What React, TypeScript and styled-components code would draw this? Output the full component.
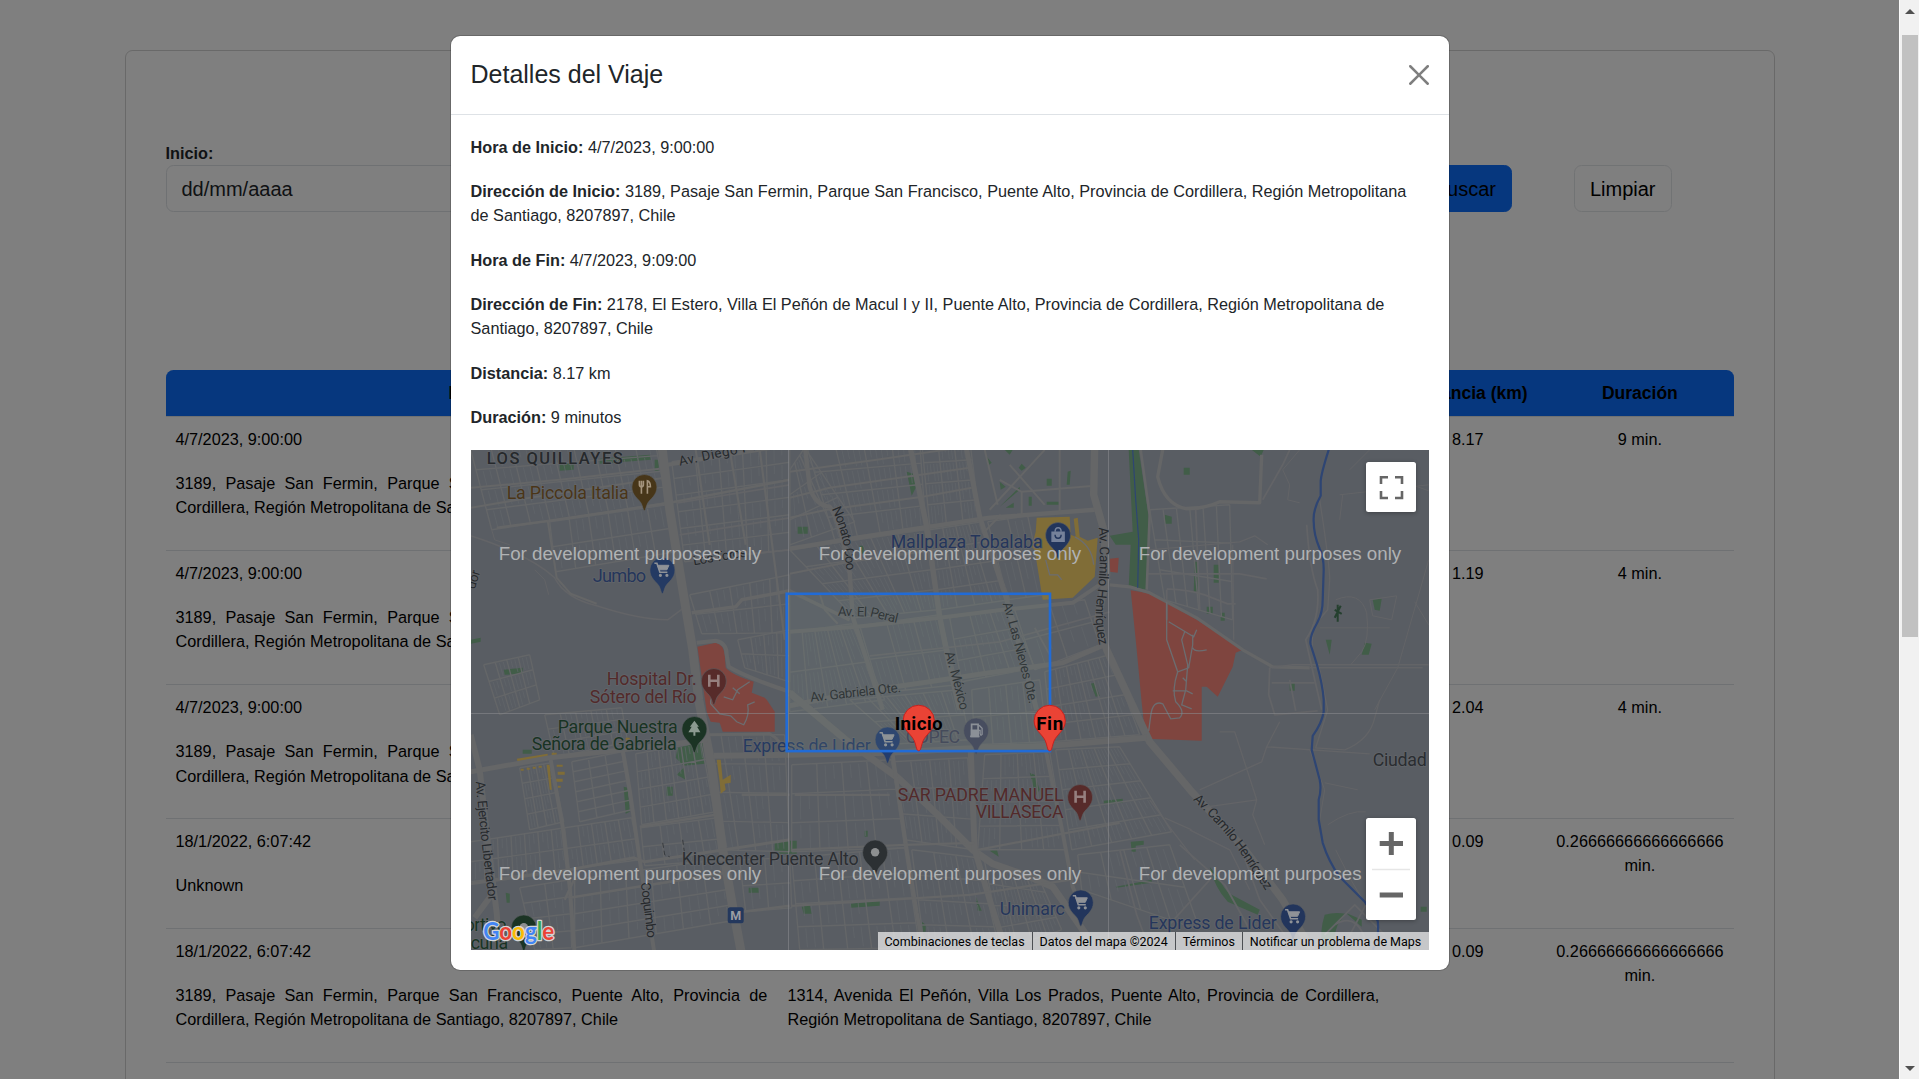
import React from "react";
import styled, { createGlobalStyle } from "styled-components";

const sans = `"Liberation Sans", Arial, sans-serif`;
const mapFont = `Roboto, "Liberation Sans", sans-serif`;

const GlobalStyle = createGlobalStyle`
  *, *::before, *::after { box-sizing: border-box; }
  html { font-size: 20px; }
  body { margin: 0; font-family: ${sans}; color: #212529; background: #fff; overflow: hidden; }
  p { margin: 0 0 1rem; }
`;

/* ---------- page frame ---------- */

const Frame = styled.div`
  display: flex;
  width: 1919px;
  height: 1079px;
  overflow: hidden;
`;

const Viewport = styled.div`
  position: relative;
  flex: 1;
  overflow: hidden;
`;

const ScrollBar = styled.div`
  display: flex;
  flex-direction: column;
  align-items: center;
  width: 20px;
  padding: 9px 1px 8px 2px;
  background: #f1f1f1;
  border-left: 1px solid #fafafa;
`;

const ScrollArrow = styled.div<{ $down?: boolean }>`
  width: 0;
  height: 0;
  border: 5px solid transparent;
  border-top: ${(p) => (p.$down ? "5px solid #505050" : "0")};
  border-bottom: ${(p) => (p.$down ? "0" : "5px solid #505050")};
`;

const ScrollThumb = styled.div`
  width: 100%;
  height: 602px;
  margin-top: 21px;
  margin-bottom: auto;
  background: #c1c1c1;
`;

/* ---------- trips page ---------- */

const Card = styled.main`
  width: 1650px;
  height: 1300px;
  margin: 50px auto 0;
  padding: 90px 40px 40px;
  border: 1px solid rgba(0, 0, 0, 0.175);
  border-radius: 7.5px;
`;

const Filters = styled.form`
  display: flex;
  align-items: flex-end;
  gap: 62px;
  padding-right: 62px;
  margin-bottom: 158px;
`;

const Field = styled.label`
  flex: 1;
  font-size: 16.25px;
  line-height: 24.375px;
  font-weight: 700;
`;

const DateBox = styled.div`
  height: 47px;
  padding: 7.5px 15px;
  border: 1px solid #dee2e6;
  border-radius: 7.5px;
  font-size: 20px;
  line-height: 30px;
  font-weight: 400;
`;

const Button = styled.button<{ $primary?: boolean }>`
  height: 47px;
  padding: 1px 15px 0;
  border: 1px solid ${(p) => (p.$primary ? "#0d6efd" : "#e3e6e9")};
  border-radius: 7.5px;
  background: ${(p) => (p.$primary ? "#0d6efd" : "transparent")};
  font: 20px ${sans};
  color: #000;
`;

const Row = styled.div`
  display: grid;
  grid-template-columns: 1fr 1fr 157px 187.2px;
  border-bottom: 1px solid #dee2e6;
  color: #000;
  font-size: 16.25px;
  line-height: 24.375px;
`;

const HeadRow = styled(Row)`
  height: 46.2px;
  background: #0d6efd;
  background-clip: padding-box;
  border-radius: 7.5px 7.5px 0 0;
  font-size: 17.5px;
  line-height: 26.25px;
  font-weight: 700;
`;

const Cell = styled.div<{ $center?: boolean }>`
  padding: 10px;
  text-align: ${(p) => (p.$center ? "center" : "justify")};
`;

/* ---------- modal ---------- */

const Backdrop = styled.div`
  position: absolute;
  inset: 0;
  display: flex;
  justify-content: center;
  align-items: flex-start;
  padding-top: 35px;
  background: rgba(0, 0, 0, 0.5);
`;

const Dialog = styled.section`
  width: 1000px;
  background: #fff;
  background-clip: padding-box;
  border: 1px solid rgba(0, 0, 0, 0.175);
  border-radius: 10px;
`;

const DialogHeader = styled.header`
  display: flex;
  align-items: center;
  justify-content: space-between;
  padding: 20px;
  border-bottom: 1px solid #dee2e6;
`;

const Title = styled.h5`
  margin: 0;
  font-size: 25px;
  line-height: 37.5px;
  font-weight: 400;
`;

const CloseIcon = styled.svg`
  width: 20px;
  height: 20px;
  opacity: 0.5;
`;

const DialogBody = styled.div`
  padding: 20px;
  font-size: 16.25px;
  line-height: 24.375px;
`;

const MapBox = styled.div`
  position: relative;
  height: 500px;
  overflow: hidden;
  background: #595d63;
  font-family: ${mapFont};
`;

const MapDrawing = styled.svg`
  display: block;
  width: 958px;
  height: 500px;
`;

const MapControl = styled.div<{ $tall?: boolean }>`
  position: absolute;
  right: 12.5px;
  ${(p) => (p.$tall ? "bottom: 30px; height: 102px;" : "top: 12.5px; height: 50px;")}
  width: 50px;
  background: #fff;
  border-radius: 2.5px;
  box-shadow: 0 1px 4px rgba(0, 0, 0, 0.3);
`;

const Attribution = styled.footer`
  position: absolute;
  right: 0;
  bottom: 0;
  display: flex;
  height: 17.5px;
  background: rgba(245, 245, 245, 0.7);
  color: #000;
  font-size: 12.5px;
  line-height: 19.5px;
  white-space: nowrap;
`;

const Credit = styled.span`
  padding: 0 7.2px 0 6.8px;
  & + & { border-left: 1px solid #4c4f53; }
`;

/* ---------- map data (x, y in map units) ---------- */

type Pt = [number, number];

const lerp = (a: Pt, b: Pt, t: number): Pt => [a[0] + (b[0] - a[0]) * t, a[1] + (b[1] - a[1]) * t];
const seg = (a: Pt, b: Pt) => `M${a[0].toFixed(1)} ${a[1].toFixed(1)}L${b[0].toFixed(1)} ${b[1].toFixed(1)}`;

/** Street blocks filling a quadrilateral, corners clockwise from top left. */
function Blocks({ q, c, r, sub = 3 }: { q: [Pt, Pt, Pt, Pt]; c: number; r: number; sub?: number }) {
  const [tl, tr, br, bl] = q;
  let main = "";
  let faint = "";
  for (let i = 0; i <= c; i++) main += seg(lerp(tl, tr, i / c), lerp(bl, br, i / c));
  for (let j = 0; j <= r; j++) main += seg(lerp(tl, bl, j / r), lerp(tr, br, j / r));
  for (let j = 0; j < r; j++) {
    for (let i = 0; i < c; i++) {
      if ((i * 5 + j * 3) % 7 === 0) continue;
      for (let k = 1; k < sub; k++) {
        const t = (i + k / sub) / c;
        const top = lerp(tl, tr, t);
        const bot = lerp(bl, br, t);
        faint += seg(lerp(top, bot, (j + 0.08) / r), lerp(top, bot, (j + ((i + k + j) % 3 ? 0.9 : 0.55)) / r));
      }
    }
  }
  return (
    <g fill="none">
      <path d={faint} stroke="#62656a" strokeWidth="0.7" />
      <path d={main} stroke="#646668" strokeWidth="1.4" />
    </g>
  );
}

const blocks: { q: [Pt, Pt, Pt, Pt]; c: number; r: number; sub?: number }[] = [
  { q: [[471, 450], [655, 440], [667, 503], [492, 530]], c: 9, r: 4 },
  { q: [[550, 522], [667, 505], [676, 552], [556, 572]], c: 6, r: 2 },
  { q: [[672, 462], [790, 445], [790, 550], [685, 562]], c: 5, r: 6 },
  { q: [[690, 595], [790, 575], [790, 633], [702, 634]], c: 5, r: 2 },
  { q: [[738, 640], [790, 630], [790, 682], [745, 668]], c: 4, r: 2 },
  { q: [[790, 470], [805, 448], [855, 522], [790, 545]], c: 3, r: 3 },
  { q: [[808, 450], [920, 442], [926, 527], [835, 540]], c: 4, r: 4, sub: 5 },
  { q: [[922, 442], [970, 440], [980, 520], [930, 526]], c: 3, r: 4, sub: 5 },
  { q: [[790, 550], [925, 530], [938, 610], [855, 618]], c: 5, r: 4, sub: 5 },
  { q: [[930, 530], [982, 522], [1010, 600], [940, 610]], c: 4, r: 4, sub: 4 },
  { q: [[988, 522], [1028, 516], [1045, 595], [1008, 600]], c: 2, r: 2 },
  { q: [[700, 735], [785, 735], [790, 852], [722, 850]], c: 4, r: 4 },
  { q: [[790, 633], [852, 624], [885, 700], [790, 712]], c: 5, r: 2, sub: 4 },
  { q: [[860, 626], [940, 615], [958, 685], [880, 693]], c: 3, r: 2, sub: 5 },
  { q: [[950, 618], [1010, 608], [1035, 668], [962, 682]], c: 3, r: 3, sub: 4 },
  { q: [[1015, 610], [1085, 600], [1100, 645], [1035, 670]], c: 2, r: 2 },
  { q: [[850, 700], [960, 690], [970, 740], [900, 744]], c: 6, r: 2, sub: 4 },
  { q: [[972, 690], [1040, 680], [1048, 742], [975, 745]], c: 4, r: 2 },
  { q: [[1045, 672], [1110, 655], [1140, 735], [1052, 742]], c: 6, r: 4 },
  { q: [[985, 755], [1050, 752], [1066, 850], [978, 850]], c: 4, r: 4, sub: 4 },
  { q: [[1056, 750], [1120, 747], [1172, 832], [1072, 850]], c: 5, r: 5, sub: 4 },
  { q: [[892, 762], [968, 758], [974, 850], [905, 840]], c: 4, r: 3, sub: 4 },
  { q: [[792, 765], [892, 760], [905, 848], [792, 852]], c: 4, r: 3 },
  { q: [[792, 858], [905, 848], [920, 948], [800, 950]], c: 5, r: 4 },
  { q: [[912, 850], [978, 858], [1000, 950], [925, 950]], c: 3, r: 4, sub: 4 },
  { q: [[985, 862], [1040, 880], [1062, 930], [1002, 950]], c: 4, r: 4, sub: 4 },
  { q: [[1078, 855], [1170, 845], [1200, 930], [1082, 890]], c: 4, r: 2 },
  { q: [[545, 715], [622, 708], [628, 742], [555, 758]], c: 5, r: 3 },
  { q: [[520, 768], [552, 763], [564, 822], [530, 830]], c: 4, r: 4 },
  { q: [[572, 762], [622, 752], [632, 810], [580, 822]], c: 3, r: 6, sub: 1 },
  { q: [[636, 754], [704, 742], [716, 812], [642, 825]], c: 6, r: 4 },
  { q: [[471, 842], [632, 818], [640, 860], [471, 882]], c: 12, r: 2 },
  { q: [[641, 828], [718, 818], [726, 860], [645, 866]], c: 4, r: 2 },
  { q: [[520, 888], [570, 880], [572, 948], [535, 950]], c: 2, r: 4 },
  { q: [[575, 880], [728, 858], [738, 920], [575, 948]], c: 6, r: 4 },
  { q: [[740, 860], [790, 858], [792, 908], [746, 912]], c: 2, r: 2 },
  { q: [[484, 665], [530, 655], [540, 700], [500, 715]], c: 4, r: 3 },
  { q: [[1150, 510], [1230, 505], [1233, 620], [1165, 600]], c: 6, r: 3, sub: 1 },
];

const roads: { d: string; w: number; c?: string }[] = [
  { d: "M471 536Q530 555 555 578Q565 598 597 606Q640 620 668 620L684 608", w: 1.5 },
  { d: "M535 570L545 580L549 595M492 530L495 540L510 545", w: 1 },
  { d: "M471 508L530 498L665 478", w: 2 },
  { d: "M471 488L560 480L660 469", w: 2 },
  { d: "M497 528L550 521L670 503L790 480", w: 2.4 },
  { d: "M548 521L557 578L571 594L597 604", w: 2 },
  { d: "M668 465L790 445", w: 4 },
  { d: "M678 503L790 485M680 535L790 518M688 560L790 550", w: 1.8 },
  { d: "M696 450L710 545M730 450L746 545M760 450L785 640", w: 2.2 },
  { d: "M692 613L736 607L742 600L790 591L850 620", w: 3.5 },
  { d: "M697 643L716 641Q727 643 727 655L729 667Q745 677 790 692L825 720", w: 4 },
  { d: "M805 445L810 487Q815 505 830 507Q840 520 850 573L853 617L883 710", w: 4.5 },
  { d: "M790 472L877 460L1000 442M790 498L830 488L970 468", w: 2 },
  { d: "M790 518L827 510L923 497L972 488", w: 2 },
  { d: "M790 549L857 538L923 528L990 518L1095 510", w: 4.5 },
  { d: "M911 450L927 527L940 617L950 667L960 710", w: 5.5 },
  { d: "M967 450L980 517L1007 600L1037 710", w: 5 },
  { d: "M985 450L998 505M1001 515L983 534M990 510L1045 450M1010 465L1045 505M1060 450L1060 512M1000 480L1022 492L1095 486M1022 492V515", w: 2 },
  { d: "M790 574L850 562L938 550M820 594L825 610L838 624", w: 2 },
  { d: "M790 632L857 627L940 618L1003 610L1073 603L1110 578", w: 4 },
  { d: "M790 706L860 692L923 683L990 673L1063 663L1105 645", w: 5 },
  { d: "M870 656L1000 642L1110 612M1035 628L1050 655", w: 1.8 },
  { d: "M1095 445L1094 495L1104 530L1107 575L1098 620L1107 650L1135 710L1150 742L1193 793L1243 847L1283 900L1312 950", w: 7.5 },
  { d: "M662 445L670 510L683 590L693 650L699 700L712 767L723 850L733 907L742 955", w: 9 },
  { d: "M710 735L770 734Q782 740 785 755", w: 3 },
  { d: "M714 756L790 755L890 753L960 749L1050 746L1147 738", w: 6 },
  { d: "M790 693L846 740L897 777L937 814L973 850L993 864L1030 877L1053 887L1067 907L1090 940", w: 7 },
  { d: "M971 750L975 850L990 900L1006 950", w: 6 },
  { d: "M893 755L907 850L917 913L925 955", w: 4 },
  { d: "M1045 745L1063 833L1073 887L1078 900", w: 4 },
  { d: "M471 772L550 758L623 750L708 740", w: 5 },
  { d: "M623 750L630 790L640 860L655 955", w: 4 },
  { d: "M551 760L563 827L570 887L575 955", w: 4 },
  { d: "M471 884L570 870L634 858L645 862L790 840", w: 3 },
  { d: "M471 735L480 770L487 833L497 913L500 955M475 918L492 895", w: 6 },
  { d: "M565 900L578 872M570 898L725 873M640 827L716 815M743 912L790 906M742 795H790", w: 2.5 },
  { d: "M795 795H890M792 850L905 845L975 843M792 906L970 895L1070 880M978 850L1120 823", w: 2.2 },
  { d: "M1163 450L1158 477Q1165 505 1187 509Q1205 509 1220 502L1260 503L1262 455", w: 3.4 },
  { d: "M1263 500L1283 465L1290 450M1196 510L1200 610M1167 590V620M1147 574H1240L1267 579M1167 589Q1190 590 1205 595L1228 604H1236", w: 1.8 },
  { d: "M1233 545L1234 640M1150 550L1240 542L1255 536L1268 545", w: 1.3 },
  { d: "M1110 585L1130 587L1150 593L1197 618L1243 650L1273 667L1310 668", w: 3.2 },
  { d: "M1270 668L1293 665H1429M1310 668H1423", w: 1.4 },
  { d: "M1141 450L1150 515L1147 590", w: 2.6 },
  { d: "M1307 525Q1310 570 1318 590Q1320 620 1306 640L1315 680L1322 710", w: 1.8 },
  { d: "M1320 500Q1330 565 1330 580L1328 610L1315 625Q1308 650 1320 670L1328 710L1316 748L1345 750Q1370 740 1375 718L1380 700", w: 1.3 },
  { d: "M1336 600Q1360 590 1367 613Q1370 640 1362 652L1351 665M1320 628H1390M1370 600L1397 596L1392 620L1373 616Z", w: 1 },
  { d: "M1429 560L1398 668L1375 710M1415 602L1429 625", w: 1 },
  { d: "M1300 450L1283 470L1290 485L1288 500L1300 503M1343 495L1340 520M1340 495L1429 485M1370 450L1350 470M1370 470L1429 491", w: 1 },
  { d: "M1270 668L1269 695L1275 715L1318 711M1272 683H1315M1290 680L1296 711", w: 1.8 },
  { d: "M1200 790L1262 762L1267 747L1280 722M1220 732L1235 732L1257 800L1253 815L1265 845M1267 747L1370 754M1200 808L1257 800M1165 818L1192 830", w: 1.3 },
  { d: "M1310 750L1325 790L1320 820M1325 783L1358 790M1328 825Q1350 810 1366 812M1336 850Q1350 880 1366 905", w: 1 },
  { d: "M1120 850L1137 915L1150 950M1165 930L1210 880M1180 845L1225 885L1250 930M1240 845L1260 900L1285 935", w: 1.8 },
  { d: "M1325 935L1355 905L1385 935M1335 925Q1360 910 1368 950M1345 945L1366 905", w: 1.8 },
  { d: "M1190 830L1230 850L1250 890M1150 800L1172 830L1195 860", w: 1.3 },
];

const greens = [
  "M1129 450L1139 450L1149 517L1147 590L1129 587L1131 545L1116 545L1110 536L1133 532Z",
  "M560 464L574 462V470L560 471ZM600 464V459L650 455L651 460ZM655 460H659V471H655Z",
  "M471 640L481 638V642L471 644ZM504 670L523 668V674L505 675Z",
  "M678 748L703 742L705 764L684 766L676 758ZM677 775L684 768L686 780Z",
  "M523 750H532V754H523ZM624 787L628 788L630 812L626 814ZM667 787H673V796H667ZM506 893L510 894V903H507Z",
  "M775 841H797V854H775ZM749 888H759V893H749Z",
  "M907 472L914 474L916 488L912 496ZM798 527H808V534H798ZM860 546H864V554H860Z",
  "M987 457L992 463L988 466ZM1005 450L1010 455L1013 450ZM1019 468L1022 464L1026 468L1022 471ZM1000 482L1006 487L1001 490ZM1000 507L1020 487V490ZM1047 479H1052V486H1047ZM1068 472L1071 471L1070 485H1067ZM1006 508L1014 503V508ZM1029 497H1032V506H1029ZM1047 502H1059V505H1047Z",
  "M1091 684L1095 683L1100 696L1096 697ZM1030 773L1035 775L1040 790L1036 796ZM1104 801L1123 799V803L1104 804ZM1131 842L1144 841V845L1136 846V852H1132Z",
  "M990 851L997 849L999 857ZM865 831H868V837H865ZM802 907L810 905L812 914H804ZM851 904L880 901V906L851 908ZM976 897L982 911H978ZM922 922L926 925V932H923ZM1116 887L1152 880V883L1117 888Z",
  "M1184 468H1190V475H1184ZM1165 515L1172 517V524H1165ZM1195 562H1198V592H1194ZM1214 565H1219V583H1214ZM1207 607H1213V614H1207ZM1221 613H1225V621H1221ZM1252 450L1264 450L1261 457Z",
  "M1373 600L1382 599L1380 611L1375 610ZM1326 640L1332 640L1330 655ZM1365 643L1372 644L1369 655H1362ZM1290 683H1295V691H1290Z",
  "M1210 867L1218 877Q1225 890 1230 894L1260 910L1258 915L1228 902Q1215 888 1210 867Z",
  "M1325 915Q1335 912 1346 914L1338 925Q1334 935 1334 950L1322 950Q1320 930 1325 915ZM1346 913L1362 920V927ZM1421 907H1427V912H1421Z",
];

const yellows = [
  "M1037 518L1070 517L1071 535L1076 537L1074 519L1078 518L1080 537L1088 541L1098 538L1095 577L1073 598L1043 600L1035 550L1032 547L1036 532Z",
  "M517 759L548 754V757L518 762ZM547 765L550 765L552 790H550ZM552 753H557V756H552ZM521 769H524V771H521ZM527 768H530V770H527ZM533 767H536V769H533ZM539 766H542V768H539Z",
  "M717 760H721L723 780L731 775V783L725 784L726 790L721 794L720 782Z",
  "M557 765H563V767H557ZM558 772H565V775H558ZM556 779H563V782H556ZM558 786H561V788H558ZM626 738H630V741H626Z",
];

const labels: { t: string; x: number; y: number; w: number; s: number; c: string; b?: number }[] = [
  { t: "LOS QUILLAYES", x: 487, y: 464.5, w: 136, s: 16.5, c: "#26292c", b: 500 },
  { t: "La Piccola Italia", x: 507, y: 499.5, w: 122, s: 17.8, c: "#4a3518" },
  { t: "Jumbo", x: 593, y: 582.5, w: 53.5, s: 18.2, c: "#25365b" },
  { t: "Hospital Dr.", x: 607, y: 685.5, w: 90, s: 17.8, c: "#522a2a" },
  { t: "Sótero del Río", x: 590, y: 702.8, w: 107, s: 17.8, c: "#522a2a" },
  { t: "Parque Nuestra", x: 558, y: 733.2, w: 120, s: 17.8, c: "#183323" },
  { t: "Señora de Gabriela", x: 532, y: 750.7, w: 145, s: 17.8, c: "#183323" },
  { t: "Express de Lider", x: 743, y: 752.3, w: 128, s: 17.8, c: "#263a60" },
  { t: "Mallplaza Tobalaba", x: 891, y: 548, w: 152, s: 17.8, c: "#25365b" },
  { t: "COPEC", x: 906, y: 743, w: 54.5, s: 17.8, c: "#3d4054" },
  { t: "SAR PADRE MANUEL", x: 898, y: 800.8, w: 166, s: 17.8, c: "#522a2a" },
  { t: "VILLASECA", x: 976, y: 818.2, w: 88, s: 17.8, c: "#522a2a" },
  { t: "Kinecenter Puente Alto", x: 682, y: 865.2, w: 177, s: 17.8, c: "#2a2d31" },
  { t: "Unimarc", x: 1000, y: 915.2, w: 65, s: 17.8, c: "#25365b" },
  { t: "Express de Lider", x: 1149, y: 928.8, w: 128, s: 17.8, c: "#25365b" },
  { t: "Ciudad", x: 1373, y: 766.3, w: 54, s: 17.8, c: "#2a2d31" },
  { t: "ortivo", x: 465, y: 931, w: 42, s: 17.8, c: "#183323" },
  { t: "cuña", x: 471, y: 949.3, w: 37.5, s: 17.8, c: "#183323" },
];

const streetNames: { t: string; d: string; w: number }[] = [
  { t: "Av. Diego Portales", d: "M680 466L800 441", w: 118 },
  { t: "Los Toros", d: "M694 565.5L752 556", w: 54 },
  { t: "Nonato Coo", d: "M832 509Q842 530 845 552L847 575", w: 64 },
  { t: "Av. El Peral", d: "M838 616L872 617L900 624", w: 60 },
  { t: "Av. Gabriela Ote.", d: "M811 702L902 692", w: 91 },
  { t: "Av. México", d: "M945 653Q953 680 961 712", w: 60 },
  { t: "Av. Las Nieves Ote.", d: "M1003 604Q1014 640 1030 706", w: 104 },
  { t: "Av. Camilo Henríquez", d: "M1099 528Q1102 560 1097 600Q1094 620 1100 647", w: 118 },
  { t: "Av. Camilo Henríquez", d: "M1193 800Q1220 825 1240 852L1266 891", w: 117 },
  { t: "Av. Ejercito Libertador", d: "M476 782Q480 830 489 902", w: 120 },
  { t: "Coquimbo", d: "M641 883L648 940", w: 56 },
  { t: "dor", d: "M475 590L481 571", w: 19 },
];

type Glyph = "food" | "cart" | "H" | "tree" | "bag" | "fuel" | "dot";

function PinGlyph({ g }: { g: Glyph }) {
  const ink = "#8f9297";
  switch (g) {
    case "H":
      return <path d="M-4.5 -6V6M4.5 -6V6M-4.5 0H4.5" stroke="#96807f" strokeWidth="2.6" fill="none" />;
    case "food":
      return (
        <path d="M-5 -6V-2Q-5 0 -3 0T-1 -2V-6M-3 -6V7M3 7V-6Q6 -5 6 0H3" stroke="#a3937c" strokeWidth="1.6" fill="none" />
      );
    case "cart":
      return (
        <g fill="none" stroke={ink} strokeWidth="1.6">
          <path d="M-8 -6.5H-5.5L-2.5 2.5H5" />
          <path d="M-5 -4.5H6.5L4.5 0H-3Z" fill={ink} strokeWidth="1" />
          <circle cx="-2" cy="5.5" r="0.8" />
          <circle cx="4.5" cy="5.5" r="0.8" />
        </g>
      );
    case "tree":
      return <path d="M0 -8L4.5 -2H2.7L6 3.5H1V7H-1V3.5H-6L-2.7 -2H-4.5Z" fill="#8b9a90" />;
    case "bag":
      return (
        <g fill="none" stroke="#75819a" strokeWidth="1.5">
          <path d="M-6 -2.5H6V6.5H-6Z" fill="#75819a" />
          <path d="M-3 -3Q-3 -7 0 -7T3 -3" />
          <path d="M-3 0Q-3 3.5 0 3.5T3 0" stroke="#22355c" />
        </g>
      );
    case "fuel":
      return (
        <g fill="none" stroke="#8d8f98" strokeWidth="1.7">
          <path d="M-4.5 6V-6H2V6M-6 6H3.5" />
          <path d="M-4.5 0H2V6H-4.5Z" fill="#8d8f98" />
          <path d="M3 -5L6 -2V4Q4.5 6 4 3V0H2" strokeWidth="1.3" />
        </g>
      );
    default:
      return <circle r="4.2" fill="#8d8f90" />;
  }
}

const pins: { x: number; y: number; c: string; g: Glyph }[] = [
  { x: 644.3, y: 510.5, c: "#473619", g: "food" },
  { x: 662.3, y: 593.5, c: "#243a63", g: "cart" },
  { x: 713.7, y: 704.5, c: "#572b2a", g: "H" },
  { x: 694.3, y: 752.5, c: "#1b3424", g: "tree" },
  { x: 1058, y: 558.5, c: "#22355c", g: "bag" },
  { x: 887.5, y: 763, c: "#233c6c", g: "cart" },
  { x: 976, y: 754, c: "#3f4258", g: "fuel" },
  { x: 1080, y: 820.5, c: "#572b2a", g: "H" },
  { x: 875, y: 876, c: "#2c3033", g: "dot" },
  { x: 1080.7, y: 926, c: "#22355c", g: "cart" },
  { x: 1293, y: 940, c: "#22355c", g: "cart" },
  { x: 523.7, y: 951, c: "#1b3424", g: "dot" },
];

const markers = [
  { x: 919, label: "Inicio", w: 48 },
  { x: 1050, label: "Fin", w: 27 },
];

const logo: [string, string][] = [
  ["G", "#4285f4"],
  ["o", "#ea4335"],
  ["o", "#fbbc04"],
  ["g", "#4285f4"],
  ["l", "#34a853"],
  ["e", "#ea4335"],
];

function CityMap() {
  return (
    <MapDrawing viewBox="471.3 450.2 958 500" fontFamily={mapFont}>
      <rect x="470" y="449" width="962" height="504" fill="#595d63" />
      {greens.map((d) => (
        <path key={d} d={d} fill="#415d48" />
      ))}
      {blocks.map((b, i) => (
        <Blocks key={i} {...b} />
      ))}
      {yellows.map((d) => (
        <path key={d} d={d} fill="#806d37" />
      ))}
      <path
        d="M697.7 647L716 643Q724 645 725 655L726 668Q732 675 754 682L752 693L765 698L767 700L775 712V732H723L720 723L711 722L707 712Z"
        fill="#7f453f"
      />
      <path d="M1110 559L1119 558L1118 573L1110 572Z" fill="#7f453f" />
      <path
        d="M1131 590.5L1152 594L1197 620L1243 650L1236 653L1233 667L1218 697L1207 687H1202V741L1146 739L1142 703L1137 650Z"
        fill="#7f453f"
      />
      <g fill="none" strokeLinejoin="round">
        {roads.map((r) => (
          <path key={r.d} d={r.d} strokeWidth={r.w} stroke={r.w < 2 ? "#636467" : "#656667"} />
        ))}
      </g>
      <g fill="none" stroke="#6c6d70" strokeWidth="1.3">
        <path d="M1167 602V640L1178 672L1189 668L1193 645V635M1169 622L1194 637L1197 630M1185 632L1182 640L1188 665L1186 690L1182 705L1192 709M1178 672Q1172 690 1176 702Q1186 712 1180 718L1171 719L1163 704Q1153 700 1151 716L1149 731M1193 648Q1195 653 1207 650M1173 691H1187L1193 694M1183 678L1187 682" />
        <path d="M718 695Q710 697 711 704L720 714L731 716L737 722L744 725Q750 715 748 705L755 702M724 697L733 700L738 690L750 682M733 688L740 694" />
        <path d="M1046 560L1050 575H1058L1062 580M1075 537Q1092 545 1094 565" />
      </g>
      <g fill="none" stroke="#2e4573">
        <path
          strokeWidth="2.2"
          d="M1329 450Q1321 475 1321 482V496Q1313 510 1314 522Q1314 535 1320 549Q1324 557 1324 570L1323 600Q1323 613 1318 622Q1309 638 1311 645L1317 664Q1323 685 1324 700V712Q1322 724 1313 736L1312 750L1320 780Q1322 790 1319 800V820L1323 843Q1329 862 1340 877L1365 902L1378 921Q1380 938 1373 950"
        />
        <path strokeWidth="1.2" d="M1133 450L1136 500L1139 540L1138 588" />
      </g>
      <path d="M1338 605V622M1335 610L1342 614M1335 618L1341 606" stroke="#25402f" strokeWidth="2" />
      <path d="M663 843L665 855L670 857M683 840L685 855" stroke="#36393d" strokeWidth="1" strokeDasharray="5 3" fill="none" />

      {/* tile seams */}
      <path d="M471 713.7H1432M788.8 450V952M1108.8 450V952" stroke="#8b8d90" strokeWidth="0.8" opacity="0.7" />

      <g fill="#26292c" fontSize="13.4" stroke="#62656a" strokeWidth="1.2" paintOrder="stroke">
        {streetNames.map((s, i) => (
          <React.Fragment key={i}>
            <path id={`street-${i}`} d={s.d} fill="none" stroke="none" />
            <text>
              <textPath href={`#street-${i}`} textLength={s.w}>
                {s.t}
              </textPath>
            </text>
          </React.Fragment>
        ))}
      </g>
      <g stroke="#62656a" strokeWidth="1.6" paintOrder="stroke" strokeLinejoin="round">
        {labels.map((l) => (
          <text key={l.t + l.y} x={l.x} y={l.y} textLength={l.w} fontSize={l.s} fontWeight={l.b ?? 400} fill={l.c}>
            {l.t}
          </text>
        ))}
      </g>
      {pins.map((p) => (
        <g key={`${p.x}`} transform={`translate(${p.x + 0.4} ${p.y + 0.5})`}>
          <path
            d="M0 0C-1.5 -1 -1.5 -4.5 -3.5 -8C-6 -12 -12.5 -15.5 -12.5 -23.8A12.5 12.5 0 0 1 12.5 -23.8C12.5 -15.5 6 -12 3.5 -8C1.5 -4.5 1.5 -1 0 0Z"
            fill={p.c}
            stroke="#5d5f63"
            strokeWidth="0.6"
          />
          <g transform="translate(0 -24)">
            <PinGlyph g={p.g} />
          </g>
        </g>
      ))}
      <rect x="728" y="907.5" width="16" height="16" rx="2.5" fill="#24385d" />
      <text x="736" y="920" textAnchor="middle" fontSize="12.5" fontWeight="700" fill="#9a9da3">
        M
      </text>

      {/* trip bounds */}
      <rect x="787" y="594" width="263.3" height="157.3" fill="rgba(130,155,150,0.12)" stroke="#216bd6" strokeWidth="2.6" />

      <g fill="#b0b2b4" fontFamily={sans} fontSize="18.75">
        {[499, 819, 1139].map((x) =>
          [560.7, 880.7].map((y) => (
            <text key={`${x}-${y}`} x={x} y={y} textLength="262.5">
              For development purposes only
            </text>
          ))
        )}
      </g>

      {markers.map((m) => (
        <g key={m.label}>
          <path
            transform={`translate(${m.x} 751)`}
            d="M0 0C-2.4 0 -2 -4 -4.4 -10C-7.5 -17 -15.6 -20.5 -15.6 -30A15.6 15.6 0 0 1 15.6 -30C15.6 -20.5 7.5 -17 4.4 -10C2 -4 2.4 0 0 0Z"
            fill="#ea4335"
            stroke="#c5221f"
            strokeWidth="1"
          />
          <text x={m.x - m.w / 2} y="730" textLength={m.w} fontSize="18.75" fontWeight="700" fill="#000">
            {m.label}
          </text>
        </g>
      ))}

      <text
        x="483.5"
        y="940.5"
        textLength="71"
        lengthAdjust="spacingAndGlyphs"
        fontFamily="Lato, sans-serif"
        fontSize="24.5"
        fontWeight="700"
        stroke="#d5d6d8"
        strokeWidth="2.6"
        strokeLinejoin="round"
        paintOrder="stroke"
      >
        {logo.map(([ch, color], i) => (
          <tspan key={i} fill={color}>
            {ch}
          </tspan>
        ))}
      </text>
    </MapDrawing>
  );
}

/* ---------- data ---------- */

const START = "3189, Pasaje San Fermin, Parque San Francisco, Puente Alto, Provincia de Cordillera, Región Metropolitana de Santiago, 8207897, Chile";
const END = "2178, El Estero, Villa El Peñón de Macul I y II, Puente Alto, Provincia de Cordillera, Región Metropolitana de Santiago, 8207897, Chile";
const PRADOS = "1314, Avenida El Peñón, Villa Los Prados, Puente Alto, Provincia de Cordillera, Región Metropolitana de Santiago, 8207897, Chile";

const trips = [
  { at: "4/7/2023, 9:00:00", from: START, until: "4/7/2023, 9:09:00", to: END, km: "8.17", min: "9 min." },
  { at: "4/7/2023, 9:00:00", from: START, until: "4/7/2023, 9:04:00", to: END, km: "1.19", min: "4 min." },
  { at: "4/7/2023, 9:00:00", from: START, until: "4/7/2023, 9:04:00", to: END, km: "2.04", min: "4 min." },
  { at: "18/1/2022, 6:07:42", from: "Unknown", until: "18/1/2022, 6:07:58", to: "Unknown", km: "0.09", min: "0.26666666666666666 min." },
  { at: "18/1/2022, 6:07:42", from: START, until: "18/1/2022, 6:07:58", to: PRADOS, km: "0.09", min: "0.26666666666666666 min." },
];

const details: [string, string][] = [
  ["Hora de Inicio:", "4/7/2023, 9:00:00"],
  ["Dirección de Inicio:", START],
  ["Hora de Fin:", "4/7/2023, 9:09:00"],
  ["Dirección de Fin:", END],
  ["Distancia:", "8.17 km"],
  ["Duración:", "9 minutos"],
];

export default function App() {
  return (
    <Frame>
      <GlobalStyle />
      <Viewport>
        <Card>
          <Filters>
            <Field>
              Inicio:
              <DateBox>dd/mm/aaaa</DateBox>
            </Field>
            <Field>
              Fin:
              <DateBox>dd/mm/aaaa</DateBox>
            </Field>
            <Button type="button" $primary>
              Buscar
            </Button>
            <Button type="button">Limpiar</Button>
          </Filters>
          <HeadRow>
            <Cell $center>Inicio</Cell>
            <Cell $center>Fin</Cell>
            <Cell $center>Distancia (km)</Cell>
            <Cell $center>Duración</Cell>
          </HeadRow>
          {trips.map((t, i) => (
            <Row key={i}>
              <Cell>
                <p>{t.at}</p>
                <p>{t.from}</p>
              </Cell>
              <Cell>
                <p>{t.until}</p>
                <p>{t.to}</p>
              </Cell>
              <Cell $center>{t.km}</Cell>
              <Cell $center>{t.min}</Cell>
            </Row>
          ))}
        </Card>
        <Backdrop>
          <Dialog>
            <DialogHeader>
              <Title>Detalles del Viaje</Title>
              <CloseIcon viewBox="0 0 16 16">
                <path d="M.293.293a1 1 0 0 1 1.414 0L8 6.586 14.293.293a1 1 0 1 1 1.414 1.414L9.414 8l6.293 6.293a1 1 0 0 1-1.414 1.414L8 9.414l-6.293 6.293a1 1 0 0 1-1.414-1.414L6.586 8 .293 1.707a1 1 0 0 1 0-1.414z" />
              </CloseIcon>
            </DialogHeader>
            <DialogBody>
              {details.map(([k, v]) => (
                <p key={k}>
                  <strong>{k}</strong> {v}
                </p>
              ))}
              <MapBox>
                <CityMap />
                <MapControl>
                  <svg width="50" height="50" fill="none" stroke="#666" strokeWidth="2.6">
                    <path d="M15 22V15.3H22M29 15.3H36V22M36 29V36H29M22 36H15V29" />
                  </svg>
                </MapControl>
                <MapControl $tall>
                  <svg width="50" height="102" fill="none" stroke="#666" strokeWidth="5">
                    <path d="M13.7 25.5H37M25.3 14V37M13.7 77H37" />
                    <path d="M6 51.5H44" stroke="#e6e6e6" strokeWidth="1.5" />
                  </svg>
                </MapControl>
                <Attribution>
                  <Credit>Combinaciones de teclas</Credit>
                  <Credit>Datos del mapa ©2024</Credit>
                  <Credit>Términos</Credit>
                  <Credit>Notificar un problema de Maps</Credit>
                </Attribution>
              </MapBox>
            </DialogBody>
          </Dialog>
        </Backdrop>
      </Viewport>
      <ScrollBar>
        <ScrollArrow />
        <ScrollThumb />
        <ScrollArrow $down />
      </ScrollBar>
    </Frame>
  );
}
